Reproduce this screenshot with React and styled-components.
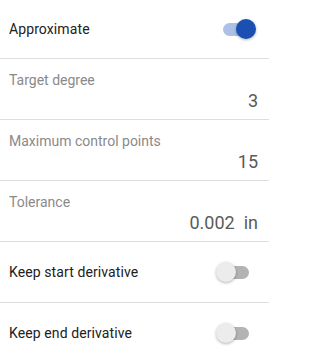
import React, { useState } from 'react';
import styled, { createGlobalStyle } from 'styled-components';

const GlobalStyle = createGlobalStyle`
  html, body {
    margin: 0;
    padding: 0;
    background: #ffffff;
  }
  body {
    font-family: Roboto, "Liberation Sans", sans-serif;
    -webkit-font-smoothing: antialiased;
  }
`;

const Panel = styled.div`
  width: 269px;
  background: #ffffff;
  display: flex;
  flex-direction: column;
`;

const ToggleRow = styled.div`
  height: ${props => props.$height || 61}px;
  box-sizing: border-box;
  display: flex;
  align-items: center;
  justify-content: space-between;
  padding: 0 13px 0 9px;
  border-bottom: 1px solid #dedede;
`;

const RowLabel = styled.span`
  font-size: 14px;
  color: #212121;
  letter-spacing: 0.1px;
`;

const FieldRow = styled.div`
  height: 61px;
  box-sizing: border-box;
  display: flex;
  flex-direction: column;
  padding: 13px 11px 0 9px;
  border-bottom: 1px solid #dedede;
`;

const FieldLabel = styled.div`
  font-size: 14px;
  line-height: 16px;
  color: #8a8a8a;
`;

const FieldValue = styled.div`
  margin-top: 2px;
  font-size: 18px;
  line-height: 22px;
  color: #5a5a5a;
  text-align: right;
`;

const Unit = styled.span`
  margin-left: 9px;
`;

const SwitchTrack = styled.button`
  position: relative;
  width: 26px;
  height: 13px;
  padding: 0;
  margin-right: 7px;
  border: none;
  border-radius: 7px;
  cursor: pointer;
  background: ${props => (props.$on ? '#adc1e6' : '#b3b3b3')};
`;

const SwitchThumb = styled.span`
  position: absolute;
  top: -4px;
  left: ${props => (props.$on ? 13 : -7)}px;
  width: 20px;
  height: 20px;
  border-radius: 50%;
  background: ${props => (props.$on ? '#1b4fb3' : '#ececec')};
  box-shadow: 0 1px 3px rgba(0, 0, 0, 0.3);
`;

function Switch({ on, onChange }) {
  return (
    <SwitchTrack $on={on} onClick={() => onChange(!on)}>
      <SwitchThumb $on={on} />
    </SwitchTrack>
  );
}

export default function App() {
  const [approximate, setApproximate] = useState(true);
  const [keepStart, setKeepStart] = useState(false);
  const [keepEnd, setKeepEnd] = useState(false);

  return (
    <Panel>
      <GlobalStyle />
      <ToggleRow $height={59}>
        <RowLabel>Approximate</RowLabel>
        <Switch on={approximate} onChange={setApproximate} />
      </ToggleRow>
      <FieldRow>
        <FieldLabel>Target degree</FieldLabel>
        <FieldValue>3</FieldValue>
      </FieldRow>
      <FieldRow>
        <FieldLabel>Maximum control points</FieldLabel>
        <FieldValue>15</FieldValue>
      </FieldRow>
      <FieldRow>
        <FieldLabel>Tolerance</FieldLabel>
        <FieldValue>
          0.002<Unit>in</Unit>
        </FieldValue>
      </FieldRow>
      <ToggleRow>
        <RowLabel>Keep start derivative</RowLabel>
        <Switch on={keepStart} onChange={setKeepStart} />
      </ToggleRow>
      <ToggleRow>
        <RowLabel>Keep end derivative</RowLabel>
        <Switch on={keepEnd} onChange={setKeepEnd} />
      </ToggleRow>
    </Panel>
  );
}
